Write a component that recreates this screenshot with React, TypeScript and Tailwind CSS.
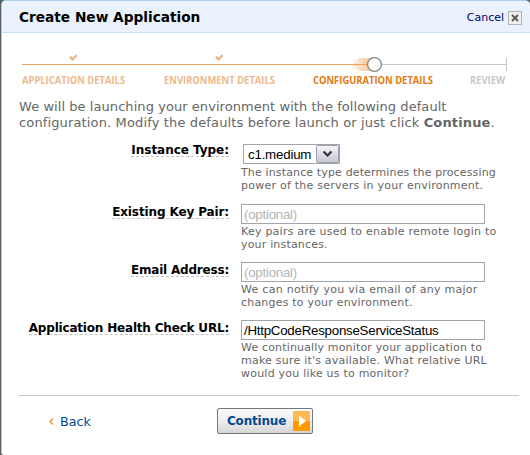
import React from "react";

function Check({ className }: { className: string }) {
  return (
    <svg className={className} width="9" height="8" viewBox="0 0 9 8" fill="none">
      <path d="M1 2.6 L3.4 5.4 L7.6 1.2" stroke="#efb98a" strokeWidth="2.5" />
    </svg>
  );
}

function Track() {
  return (
    <svg className="block" width="487" height="23" viewBox="0 0 487 23">
      <rect x="0" y="12" width="345" height="1" fill="#e9a25f" />
      <rect x="352" y="12" width="133" height="1" fill="#c8c8c8" />
      <rect x="484" y="6" width="1" height="13" fill="#c8c8c8" />
      <defs>
        <linearGradient id="trail" x1="0" x2="1">
          <stop offset="0" stopColor="#f0a860" stopOpacity="0.05" />
          <stop offset="1" stopColor="#f0a860" stopOpacity="0.65" />
        </linearGradient>
      </defs>
      <path d="M336 6h13v2h-13z M330 8h17v1h-17z M335 9h12v1h-12z M331 10h16v2h-16z M325 12h22v1h-22z M330 13h16v2h-16z M333 15h14v1h-14z M329 16h18v1h-18z M337 17h12v2h-12z" fill="url(#trail)" />
      <circle cx="352.5" cy="12.5" r="6.9" fill="#fff" stroke="#858585" strokeWidth="1.3" />
    </svg>
  );
}

function Step({ label, width, color }: { label: string; width: string; color: string }) {
  return (
    <div className={`${width} ${color} whitespace-nowrap`}>
      <span className="inline-block origin-left scale-x-[.855]">{label}</span>
    </div>
  );
}

type HelpLine = { text: string; tracking: string };

function Row({ label, tracking, children, help, height }: { label: string; tracking: string; children: React.ReactNode; help: HelpLine[]; height: string }) {
  return (
    <div className={`flex ${height}`}>
      <div className="flex w-[227px] justify-end">
        <span className={`h-[15px] whitespace-nowrap border-b border-dashed border-[#c4c4c4] text-[12px] leading-[16px] font-bold text-black ${tracking}`}>
          {label}
        </span>
      </div>
      <div className="ml-3">
        {children}
        <div className="mt-px text-[11px] leading-[13px] text-[#666]">
          {help.map((line) => (
            <div key={line.text} className={`whitespace-nowrap ${line.tracking}`}>{line.text}</div>
          ))}
        </div>
      </div>
    </div>
  );
}

function Field({ value, muted }: { value: string; muted?: boolean }) {
  return (
    <div className={`h-5 w-[244px] border border-[#a0a6ad] bg-white pl-[2px] font-['Liberation_Sans',sans-serif] text-[13.33px] leading-[19px] tracking-[-0.26px] whitespace-nowrap ${muted ? "text-[#b5b5b5]" : "text-black"}`}>
      {value}
    </div>
  );
}

export default function App() {
  return (
    <div className="h-[455px] w-[530px] overflow-hidden bg-[#5b5d60] pl-px font-['DejaVu_Sans',Verdana,sans-serif]">
      <div className="h-full overflow-hidden rounded-t-[5px] rounded-bl-[3px] border-t border-l border-[#a8cfeb] bg-white">
        <header className="flex h-8 items-center justify-between border-b border-[#c3dff3] bg-[#eaf2fe] pt-[2px] pr-2 pl-[17px]">
          <h1 className="text-[13.7px] font-bold whitespace-nowrap text-black">Create New Application</h1>
          <div className="flex items-center gap-1 text-[11px] text-[#000066]">
            <span className="leading-[14px]">Cancel</span>
            <svg width="14" height="14" viewBox="0 0 14 14">
              <rect x="0.5" y="0.5" width="13" height="13" fill="#eee" stroke="#b5b5b5" />
              <path d="M4 4l6 6M10 4l-6 6" stroke="#555" strokeWidth="1.8" />
            </svg>
          </div>
        </header>

        <div className="relative mt-[19px] ml-5">
          <Track />
          <Check className="absolute top-[2px] left-[47px]" />
          <Check className="absolute top-[2px] left-[193px]" />
          <div className="-mt-[2px] flex h-4 font-['Open_Sans',sans-serif] text-[11px] leading-[14px] font-bold">
            <Step label="APPLICATION DETAILS" width="w-[142px]" color="text-[#f0b98a]" />
            <Step label="ENVIRONMENT DETAILS" width="w-[149px]" color="text-[#f0b98a]" />
            <Step label="CONFIGURATION DETAILS" width="w-[157px]" color="text-[#e47911]" />
            <Step label="REVIEW" width="w-[39px]" color="text-[#c8c8c8]" />
          </div>
        </div>

        <div className="mt-[10px] pl-[17px] text-[13px] leading-4 whitespace-nowrap text-[#666]">
          <div className="tracking-[0.06px]">We will be launching your environment with the following default</div>
          <div className="tracking-[0.14px]">configuration. Modify the defaults before launch or just click <b>Continue</b>.</div>
        </div>

        <div className="mt-[11px]">
          <Row
            label="Instance Type:"
            tracking="tracking-[-0.03px]"
            height="h-[62px]"
            help={[
              { text: "The instance type determines the processing", tracking: "tracking-[0.14px]" },
              { text: "power of the servers in your environment.", tracking: "tracking-[0.24px]" },
            ]}
          >
            <div className="mt-[2px] mb-[2px] ml-[2px] flex h-5 w-[97px] border border-[#a0a6ad] bg-white font-['Liberation_Sans',sans-serif] text-[13.33px] leading-[19px] tracking-[-0.22px] text-black">
              <span className="w-[72px] pl-1">c1.medium</span>
              <svg width="23" height="18" viewBox="0 0 23 18">
                <defs>
                  <linearGradient id="arrow" x2="0" y2="1">
                    <stop stopColor="#f7f7fa" />
                    <stop offset="1" stopColor="#c4c6d2" />
                  </linearGradient>
                </defs>
                <rect x="0.5" y="0.5" width="22" height="17" rx="1" fill="url(#arrow)" stroke="#9b9fae" />
                <path d="M7.5 6.5l4 4 4-4" fill="none" stroke="#333" strokeWidth="2.2" />
              </svg>
            </div>
          </Row>
          <Row
            label="Existing Key Pair:"
            tracking="tracking-[-0.12px]"
            height="h-[58px]"
            help={[
              { text: "Key pairs are used to enable remote login to", tracking: "tracking-[0.24px]" },
              { text: "your instances.", tracking: "tracking-[0.18px]" },
            ]}
          >
            <Field value="(optional)" muted />
          </Row>
          <Row
            label="Email Address:"
            tracking="tracking-[-0.2px]"
            height="h-[58px]"
            help={[
              { text: "We can notify you via email of any major", tracking: "tracking-[0.28px]" },
              { text: "changes to your environment.", tracking: "tracking-[0.2px]" },
            ]}
          >
            <Field value="(optional)" muted />
          </Row>
          <Row
            label="Application Health Check URL:"
            tracking="tracking-[-0.19px]"
            height="h-[75px]"
            help={[
              { text: "We continually monitor your application to", tracking: "tracking-[0.16px]" },
              { text: "make sure it's available. What relative URL", tracking: "tracking-[0.22px]" },
              { text: "would you like us to monitor?", tracking: "tracking-[0.22px]" },
            ]}
          >
            <Field value="/HttpCodeResponseServiceStatus" />
          </Row>
        </div>

        <footer className="mr-[11px] ml-[17px] flex border-t border-[#c8c8c8] pt-3">
          <a className="flex w-[198px] items-center pt-px pl-[30px] text-[12.7px] text-[#004b91]">
            <svg className="mr-[6px]" width="5" height="7" viewBox="0 0 5 7">
              <path d="M4 .5l-3 3 3 3" fill="none" stroke="#e98b2a" strokeWidth="1.2" />
            </svg>
            Back
          </a>
          <button className="flex h-[26px] w-24 items-center justify-between rounded-[2px] border border-[#77777a] bg-linear-to-b from-[#fafafa] via-[#eeeeee] via-50% to-[#d6d6d6] pr-[2px] pl-[9px] text-[12px] font-bold tracking-[-0.2px] text-[#004b91]">
            <span>Continue</span>
            <svg width="17" height="20" viewBox="0 0 17 20">
              <rect width="17" height="20" rx="1" fill="#ffb955" />
              <rect y="10" width="17" height="10" rx="1" fill="#ff9900" />
              <path d="M6 4.5v11l7-5.5z" fill="#fff" />
            </svg>
          </button>
        </footer>
      </div>
    </div>
  );
}
